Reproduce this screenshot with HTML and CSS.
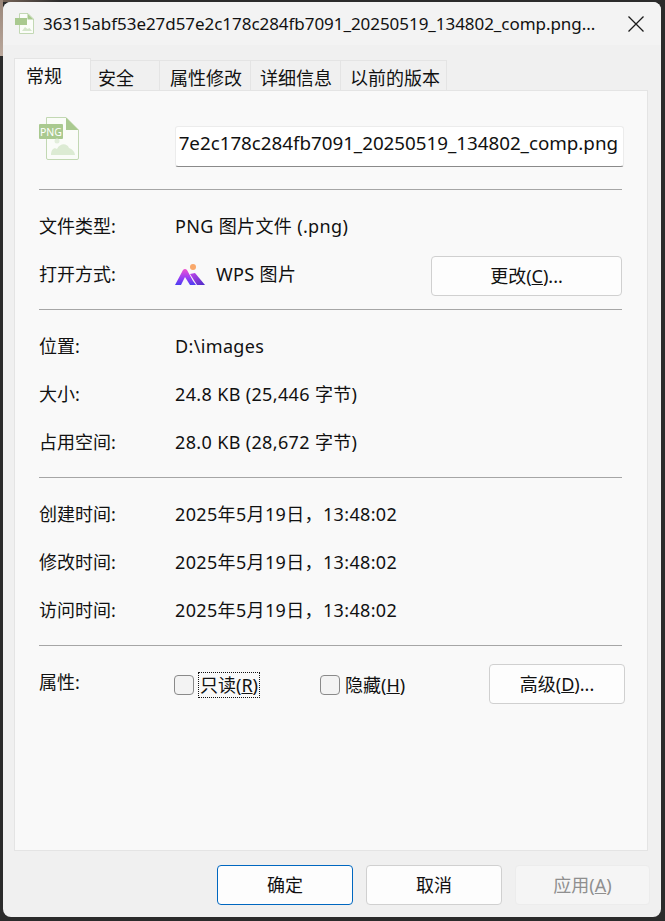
FILE: index.html
```html
<!DOCTYPE html>
<html lang="zh-CN">
<head>
  <meta charset="UTF-8">
  <title>文件属性</title>
  <link rel="stylesheet" href="styles.css">
</head>
<body>
  <div class="dialog">
    <div class="title-bar">
      <svg class="title-icon" viewBox="0 0 20 22">
        <path d="M4.500 .5H13L18.500 6V20.500H4.500Z" fill="#fbfdf9" stroke="#c3d8b4"/>
        <path d="M12.500 .5V6.500H18.500Z" fill="#a9c98f"/>
        <rect x="0" y="5" width="12" height="7" fill="#a9c98f"/>
        <path d="M7 18L10 14L12.500 16L14.500 15L17 18Z" fill="#d5e6cb"/>
      </svg>
      <div class="title-text">36315abf53e27d57e2c178c284fb7091_20250519_134802_comp.png...</div>
      <svg class="close-icon" viewBox="0 0 16 16">
        <path d="M.5 .5L15.500 15.500M15.500 .5L.5 15.500" stroke="#1a1a1a" stroke-width="1.300" fill="none"/>
      </svg>
    </div>

    <div class="tabs">
      <div class="tab active">常规</div>
      <div class="tab">安全</div>
      <div class="tab">属性修改</div>
      <div class="tab">详细信息</div>
      <div class="tab">以前的版本</div>
    </div>

    <div class="panel">
      <div class="file-head">
        <svg class="file-icon" viewBox="0 0 40 44">
          <path d="M7.500 .5H27L39.500 13V41A1.500 1.500 0 0 1 38 42.500H9A1.500 1.500 0 0 1 7.500 41Z" fill="#fafcf8" stroke="#c2d8b3"/>
          <path d="M27 .5V13H39.500Z" fill="#a9c98f"/>
          <rect x="0" y="7" width="24" height="15" rx="1" fill="#a9c98f"/>
          <text x="12" y="18.500" class="file-icon-label">PNG</text>
          <circle cx="18" cy="24" r="2.500" fill="#e2eedb"/>
          <path d="M12 38C12 33 15 30 18 32C21 26 28 26 30 31C33 32 36 35 36 38Z" fill="#dcebd3"/>
        </svg>
        <div class="name-box">7e2c178c284fb7091_20250519_134802_comp.png</div>
      </div>

      <div class="section">
        <div class="row">
          <div class="label">文件类型:</div>
          <div class="value">PNG 图片文件 (.png)</div>
        </div>
        <div class="row">
          <div class="label">打开方式:</div>
          <div class="value">
            <svg class="app-icon" viewBox="0 0 30 22">
              <defs>
                <linearGradient id="wpsLeft" x1="0" y1="0" x2="0" y2="1">
                  <stop offset="0" stop-color="#ef52cf"/>
                  <stop offset="0.55" stop-color="#9a3cf5"/>
                  <stop offset="1" stop-color="#4b3ff0"/>
                </linearGradient>
                <linearGradient id="wpsRight" x1="0" y1="0" x2="1" y2="1">
                  <stop offset="0" stop-color="#c247ea"/>
                  <stop offset="1" stop-color="#4a2bc8"/>
                </linearGradient>
              </defs>
              <circle cx="18" cy="3" r="3" fill="#f9a86a"/>
              <path d="M0 21L8 6Q10 4 12 6L18 17L21 21H15L10 13L6 21Z" fill="url(#wpsLeft)"/>
              <path d="M15 10L20 9L30 21H22Z" fill="url(#wpsRight)"/>
            </svg>
            <span>WPS 图片</span>
            <button class="btn change-btn" type="button">更改(<u>C</u>)...</button>
          </div>
        </div>
      </div>

      <div class="section">
        <div class="row">
          <div class="label">位置:</div>
          <div class="value">D:\images</div>
        </div>
        <div class="row">
          <div class="label">大小:</div>
          <div class="value">24.8 KB (25,446 字节)</div>
        </div>
        <div class="row">
          <div class="label">占用空间:</div>
          <div class="value">28.0 KB (28,672 字节)</div>
        </div>
      </div>

      <div class="section">
        <div class="row">
          <div class="label">创建时间:</div>
          <div class="value">2025年5月19日，13:48:02</div>
        </div>
        <div class="row">
          <div class="label">修改时间:</div>
          <div class="value">2025年5月19日，13:48:02</div>
        </div>
        <div class="row">
          <div class="label">访问时间:</div>
          <div class="value">2025年5月19日，13:48:02</div>
        </div>
      </div>

      <div class="section last">
        <div class="row">
          <div class="label">属性:</div>
          <div class="value attrs">
            <label class="check"><span class="box"></span><span class="check-text focus">只读(<u>R</u>)</span></label>
            <label class="check"><span class="box"></span><span class="check-text">隐藏(<u>H</u>)</span></label>
            <button class="btn advanced-btn" type="button">高级(<u>D</u>)...</button>
          </div>
        </div>
      </div>
    </div>

    <div class="footer">
      <button class="btn primary" type="button">确定</button>
      <button class="btn" type="button">取消</button>
      <button class="btn disabled" type="button">应用(<u>A</u>)</button>
    </div>
  </div>
</body>
</html>
```

FILE: styles.css
```css
html, body {
  height: 100%;
}

body {
  margin: 0;
  padding: 2px 4px 4px 3px;
  box-sizing: border-box;
  background:
    linear-gradient(#9a8679, #b9a79b) 0 0 / 3px 56px no-repeat,
    linear-gradient(90deg, #7a675a, #2b2b2b) 0 0 / 60px 2px no-repeat,
    #2b2b2b;
  font-family: "Noto Sans", "Noto Sans CJK SC", sans-serif;
  font-size: 18px;
  color: #111;
}

.dialog {
  height: 100%;
  display: flex;
  flex-direction: column;
  background: #f0f0f0;
  border-radius: 8px;
  overflow: hidden;
}

.title-bar {
  height: 43px;
  flex-shrink: 0;
  display: flex;
  align-items: center;
  background: #f3f3f3;
  padding: 0 17px 0 12px;
}

.title-icon {
  width: 20px;
  height: 22px;
  margin-right: 8px;
}

.title-text {
  flex: 1;
  font-size: 17px;
  letter-spacing: -.05px;
  line-height: 40px;
  white-space: nowrap;
}

.close-icon {
  width: 16px;
  height: 16px;
}

.tabs {
  display: flex;
  align-items: flex-end;
  height: 45px;
  flex-shrink: 0;
  padding-left: 11px;
  position: relative;
  z-index: 1;
}

.tab {
  height: 30px;
  line-height: 34px;
  padding: 0 8px 0 9px;
  box-sizing: border-box;
  background: #f0f0f0;
  border: 1px solid #e4e4e4;
  border-left: 0;
  border-bottom: 0;
  white-space: nowrap;
}

.tab:nth-child(2) {
  padding: 0 25px 0 7px;
}

.tab:nth-child(3) {
  padding-left: 10px;
}

.tab:nth-child(5) {
  padding-right: 6px;
}

.tab.active {
  height: 33px;
  width: 77px;
  padding: 0 11px;
  margin-bottom: -1px;
  background: #f9f9f9;
  border-left: 1px solid #e4e4e4;
}

.panel {
  height: 761px;
  flex-shrink: 0;
  box-sizing: border-box;
  margin: 0 13px 0 11px;
  padding: 0 25px 0 24px;
  background: #f9f9f9;
  border: 1px solid #e4e4e4;
}

.file-head {
  height: 98px;
  box-sizing: border-box;
  padding-top: 26px;
  display: flex;
  align-items: flex-start;
}

.file-icon {
  width: 40px;
  height: 44px;
  margin-right: 96px;
}

.file-icon-label {
  font-size: 10.5px;
  fill: #fff;
  text-anchor: middle;
}

.name-box {
  flex: 1;
  height: 41px;
  margin-top: 9px;
  margin-right: -2px;
  box-sizing: border-box;
  padding-right: 5px;
  background: #fff;
  border: 1px solid #ececec;
  border-bottom: 1px solid #8a8a8a;
  border-radius: 3px;
  font-size: 18.8px;
  letter-spacing: -.02px;
  line-height: 32px;
  text-align: right;
  white-space: nowrap;
}

.section {
  border-top: 1px solid #a6a6a6;
  padding: 12px 0 11px;
}

.section.last {
  padding-bottom: 0;
}

.row {
  height: 48px;
  display: flex;
  line-height: 48px;
}

.label {
  width: 136px;
  flex-shrink: 0;
}

.value {
  flex: 1;
  display: flex;
  align-items: flex-start;
  letter-spacing: .35px;
  white-space: pre;
}

.app-icon {
  width: 30px;
  height: 22px;
  margin: 14px 11px 0 0;
}

.btn {
  height: 40px;
  box-sizing: border-box;
  background: #fdfdfd;
  border: 1px solid #d0d0d0;
  border-radius: 4px;
  font-family: inherit;
  font-size: 18px;
  line-height: 38px;
  color: #111;
  padding: 0;
}

.change-btn {
  width: 191px;
  margin: 6px 0 0 auto;
}

.attrs {
  margin-right: -3px;
  letter-spacing: 0;
}

.check {
  display: flex;
  align-items: flex-start;
  margin-top: 14px;
}

.box {
  width: 20px;
  height: 20px;
  box-sizing: border-box;
  margin: 3px 4px 0 -1px;
  background: #f3f3f3;
  border: 1px solid #8a8a8a;
  border-radius: 4px;
}

.check-text {
  height: 26px;
  line-height: 26px;
  padding-left: 1px;
  white-space: nowrap;
}

.focus {
  width: 62px;
  box-sizing: border-box;
  padding-left: 2px;
  margin-right: 61px;
  outline: 1px dotted #111;
  outline-offset: -1px;
}

.advanced-btn {
  width: 136px;
  margin: 6px 0 0 auto;
}

.footer {
  flex: 1;
  display: flex;
  justify-content: flex-end;
  align-items: flex-start;
  gap: 13px;
  padding: 14px 11px 0 0;
}

.footer .btn {
  width: 136px;
}

.footer .primary {
  border-color: #0067c0;
}

.footer .disabled {
  width: 135px;
  background: #f5f5f5;
  border-color: #ececec;
  color: #8f8f8f;
}
```
